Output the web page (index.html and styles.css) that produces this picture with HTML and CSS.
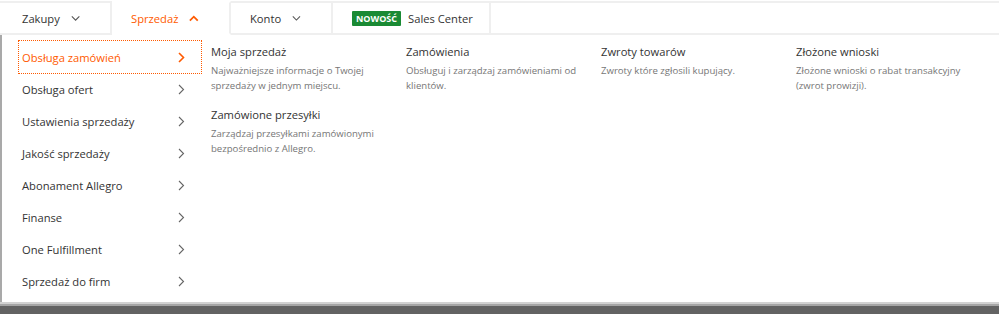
FILE: index.html
```html
<!DOCTYPE html>
<html lang="pl">
<head>
<meta charset="utf-8">
<title>Sprzedaż</title>
<link rel="stylesheet" href="styles.css">
</head>
<body>
<div class="page">
  <nav class="topbar">
    <div class="tab tab-first">
      <span class="tab-label">Zakupy</span>
      <svg class="chev-down" width="11" height="7" viewBox="0 0 11 7"><path d="M1 1 L5.5 5.5 L10 1" fill="none" stroke="#555" stroke-width="1.3"/></svg>
    </div>
    <div class="tab tab-active">
      <span class="tab-label">Sprzedaż</span>
      <svg class="chev-up" width="11" height="7" viewBox="0 0 11 7"><path d="M1 6 L5.5 1.5 L10 6" fill="none" stroke="#ff5a00" stroke-width="2"/></svg>
    </div>
    <div class="tab">
      <span class="tab-label">Konto</span>
      <svg class="chev-down" width="11" height="7" viewBox="0 0 11 7"><path d="M1 1 L5.5 5.5 L10 1" fill="none" stroke="#555" stroke-width="1.3"/></svg>
    </div>
    <div class="tab tab-last">
      <span class="badge">NOWOŚĆ</span>
      <span class="tab-label">Sales Center</span>
    </div>
    <div class="tab-filler"></div>
  </nav>

  <div class="dropdown">
    <ul class="side">
      <li class="side-item is-focused"><span>Obsługa zamówień</span><svg width="7" height="11" viewBox="0 0 7 11"><path d="M1 1 L5.5 5.5 L1 10" fill="none" stroke="#ff5a00" stroke-width="1.6"/></svg></li>
      <li class="side-item"><span>Obsługa ofert</span><svg width="7" height="11" viewBox="0 0 7 11"><path d="M1 1 L5.5 5.5 L1 10" fill="none" stroke="#666" stroke-width="1.1"/></svg></li>
      <li class="side-item"><span>Ustawienia sprzedaży</span><svg width="7" height="11" viewBox="0 0 7 11"><path d="M1 1 L5.5 5.5 L1 10" fill="none" stroke="#666" stroke-width="1.1"/></svg></li>
      <li class="side-item"><span>Jakość sprzedaży</span><svg width="7" height="11" viewBox="0 0 7 11"><path d="M1 1 L5.5 5.5 L1 10" fill="none" stroke="#666" stroke-width="1.1"/></svg></li>
      <li class="side-item"><span>Abonament Allegro</span><svg width="7" height="11" viewBox="0 0 7 11"><path d="M1 1 L5.5 5.5 L1 10" fill="none" stroke="#666" stroke-width="1.1"/></svg></li>
      <li class="side-item"><span>Finanse</span><svg width="7" height="11" viewBox="0 0 7 11"><path d="M1 1 L5.5 5.5 L1 10" fill="none" stroke="#666" stroke-width="1.1"/></svg></li>
      <li class="side-item"><span>One Fulfillment</span><svg width="7" height="11" viewBox="0 0 7 11"><path d="M1 1 L5.5 5.5 L1 10" fill="none" stroke="#666" stroke-width="1.1"/></svg></li>
      <li class="side-item"><span>Sprzedaż do firm</span><svg width="7" height="11" viewBox="0 0 7 11"><path d="M1 1 L5.5 5.5 L1 10" fill="none" stroke="#666" stroke-width="1.1"/></svg></li>
    </ul>

    <div class="cards">
      <div class="card">
        <div class="card-title">Moja sprzedaż</div>
        <div class="card-desc">Najważniejsze informacje o Twojej sprzedaży w jednym miejscu.</div>
      </div>
      <div class="card">
        <div class="card-title">Zamówienia</div>
        <div class="card-desc">Obsługuj i zarządzaj zamówieniami od klientów.</div>
      </div>
      <div class="card">
        <div class="card-title">Zwroty towarów</div>
        <div class="card-desc">Zwroty które zgłosili kupujący.</div>
      </div>
      <div class="card">
        <div class="card-title">Złożone wnioski</div>
        <div class="card-desc">Złożone wnioski o rabat transakcyjny (zwrot prowizji).</div>
      </div>
      <div class="card">
        <div class="card-title">Zamówione przesyłki</div>
        <div class="card-desc">Zarządzaj przesyłkami zamówionymi bezpośrednio z Allegro.</div>
      </div>
    </div>
  </div>
  <div class="shade"></div>
</div>
</body>
</html>
```

FILE: styles.css
```css
* { box-sizing: border-box; }

html, body {
  margin: 0;
  padding: 0;
  background: #ffffff;
}

body {
  font-family: "Open Sans", "Noto Sans", "Liberation Sans", sans-serif;
  color: #333333;
}

.page {
  width: 999px;
  height: 314px;
  padding-top: 1px;
  display: flex;
  flex-direction: column;
}

/* top navigation */
.topbar {
  display: flex;
  height: 34px;
  border-top: 2px solid #efefef;
  border-bottom: 2px solid #efefef;
  font-size: 11.2px;
  white-space: nowrap;
}

.tab {
  display: flex;
  align-items: center;
  gap: 11px;
  flex: none;
  padding: 0 30px 0 19px;
  border-right: 2px solid #efefef;
  color: #333333;
}

.tab-first {
  padding-left: 22px;
  width: 112px;
}

.tab-active {
  color: #ff5a00;
  width: 119px;
  margin-top: -2px;
  margin-bottom: -2px;
  border-top: 2px solid #ffffff;
  border-bottom: 2px solid #ffffff;
  background: #ffffff;
}

.tab-active + .tab {
  width: 102px;
}

.tab-last {
  padding: 0 19px;
  gap: 7px;
  width: 158px;
}

.tab-filler {
  flex: 1;
}

.chev-down,
.chev-up {
  display: block;
  margin-top: 1px;
}

.badge {
  display: inline-flex;
  align-items: center;
  height: 15px;
  padding: 0 4px;
  background: #1a8a34;
  color: #ffffff;
  font-size: 9px;
  font-weight: 700;
  border-radius: 1px;
}

/* dropdown panel */
.dropdown {
  flex: 1;
  display: flex;
  border-left: 2px solid #a9a9a9;
  background: #ffffff;
}

.side {
  list-style: none;
  margin: 0;
  padding: 6px 0 0 17px;
  width: 209px;
  font-size: 11.2px;
}

.side-item {
  height: 32px;
  width: 182px;
  padding: 0 16px 0 3px;
  display: flex;
  align-items: center;
  justify-content: space-between;
  color: #333333;
}

.side-item svg {
  display: block;
}

.side-item.is-focused {
  color: #ff5a00;
  outline: 1px dotted #ff5a00;
  outline-offset: 0;
}

.cards {
  display: grid;
  grid-template-columns: repeat(4, 195px);
  grid-auto-rows: min-content;
  row-gap: 14px;
  padding-top: 9px;
  align-content: start;
}

.card {
  padding-right: 16px;
}

.card-title {
  font-size: 11.2px;
  line-height: 16px;
  color: #333333;
  margin-bottom: 3px;
}

.card-desc {
  font-size: 9.6px;
  line-height: 15px;
  color: #767676;
}

/* bottom shade */
.shade {
  height: 12px;
  flex: none;
  background: linear-gradient(#d2d2d2 0, #d2d2d2 2px, #a6a6a6 2px, #a6a6a6 4px, #636363 4px, #636363 100%);
}
```
